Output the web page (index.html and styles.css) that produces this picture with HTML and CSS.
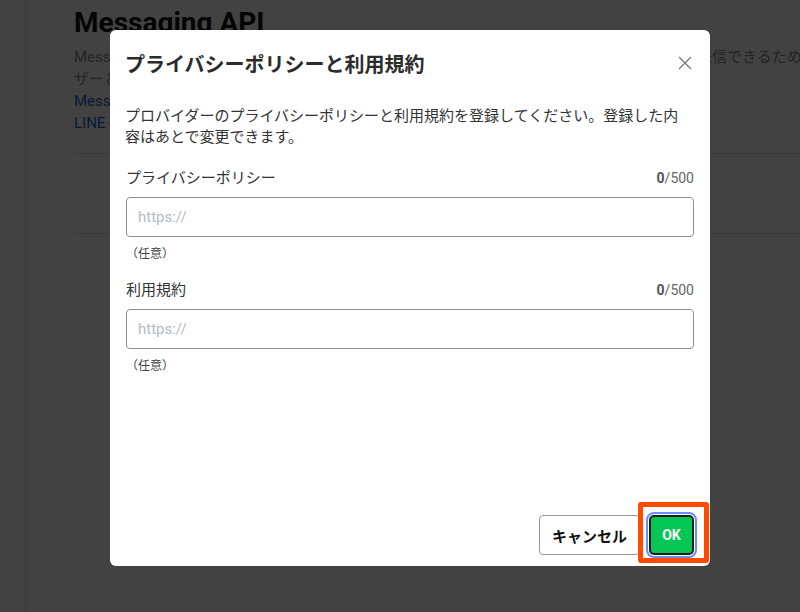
FILE: index.html
```html
<!DOCTYPE html>
<html lang="ja">
<head>
<meta charset="utf-8">
<title>プライバシーポリシーと利用規約</title>
<link rel="stylesheet" href="styles.css">
</head>
<body>
<div class="app">
  <aside class="sidebar"></aside>
  <main class="main">
    <h1 class="page-title">Messaging API</h1>
    <p class="line">Messaging APIを利用すると、ボットサーバーからユーザーに対して、それぞれメッセージを送信できるため、ユー</p>
    <p class="line">ザーとのコミュニケーションをより豊かにできます。</p>
    <p class="line link">Messaging APIドキュメント</p>
    <p class="line link">LINE Developersコンソールのドキュメント</p>
    <div class="rule first"></div>
    <div class="section"></div>
    <div class="rule"></div>
  </main>
</div>

<div class="overlay"></div>

<div class="modal" role="dialog">
  <div class="modal-header">
    <h2 class="modal-title">プライバシーポリシーと利用規約</h2>
    <button class="close" aria-label="閉じる">
      <svg width="14" height="14" viewBox="0 0 14 14"><path d="M1 1 L13 13 M13 1 L1 13" stroke="#7a7a7a" stroke-width="1.4" fill="none"/></svg>
    </button>
  </div>
  <p class="desc">プロバイダーのプライバシーポリシーと利用規約を登録してください。登録した内容はあとで変更できます。</p>

  <div class="field">
    <div class="label-row"><span class="label">プライバシーポリシー</span><span class="count"><b>0</b>/500</span></div>
    <input class="input" type="text" placeholder="https://">
    <div class="note">（任意）</div>
  </div>

  <div class="field second">
    <div class="label-row"><span class="label">利用規約</span><span class="count"><b>0</b>/500</span></div>
    <input class="input" type="text" placeholder="https://">
    <div class="note">（任意）</div>
  </div>

  <div class="modal-footer">
    <button class="btn cancel">キャンセル</button>
    <div class="ok-wrap">
      <button class="btn ok">OK</button>
      <span class="highlight"></span>
    </div>
  </div>
</div>
</body>
</html>
```

FILE: styles.css
```css
* { box-sizing: border-box; }
html, body { margin: 0; padding: 0; }
body {
  width: 800px;
  height: 612px;
  overflow: hidden;
  background: #fff;
  font-family: Roboto, "Noto Sans CJK JP", sans-serif;
  color: #333;
  position: relative;
}
.app {
  display: flex;
  height: 612px;
}
.sidebar {
  width: 26px;
  flex: none;
  border-right: 1px solid #e4e4e4;
}
.main {
  flex: 1;
  padding-left: 48px;
  padding-top: 6px;
  min-width: 0;
  overflow: hidden;
}
.page-title {
  margin: 0;
  font-size: 28px;
  line-height: 34px;
  font-weight: 700;
  color: #111;
  white-space: nowrap;
}
.line {
  margin: 0;
  font-size: 15px;
  line-height: 22px;
  color: #8a8a8a;
  white-space: nowrap;
}
.page-title + .line { margin-top: 6px; }
.line.link { color: #1f62d6; }
.rule { height: 1px; background: #dcdcdc; }
.rule.first { margin-top: 19px; }
.section { height: 79px; }

.overlay {
  position: absolute;
  inset: 0;
  background: rgba(0, 0, 0, 0.74);
}

.modal {
  position: absolute;
  left: 110px;
  top: 30px;
  width: 600px;
  height: 536px;
  background: #fff;
  border-radius: 6px;
  padding: 22px 16px 11px 15px;
  display: flex;
  flex-direction: column;
}
.modal-header {
  display: flex;
  align-items: center;
  justify-content: space-between;
}
.modal-title {
  margin: 0;
  font-size: 20px;
  line-height: 26px;
  font-weight: 700;
  color: #2b2b2b;
}
.close {
  width: 24px;
  height: 24px;
  margin-right: -3px;
  margin-top: -4px;
  border: 0;
  background: none;
  padding: 0;
  display: flex;
  align-items: center;
  justify-content: center;
}
.desc {
  margin: 28px 10px 0 0;
  font-size: 15px;
  line-height: 21px;
  color: #333;
}
.field { margin-top: 18px; padding-left: 1px; }
.field.second { margin-top: 15px; }
.label-row {
  display: flex;
  justify-content: space-between;
  align-items: center;
  line-height: 21px;
}
.label { font-size: 15px; color: #333; padding-top: 1px; }
.count { font-size: 14px; color: #666; padding-top: 2px; }
.count b { color: #555; }
.input {
  display: block;
  width: 100%;
  height: 40px;
  margin-top: 8px;
  border: 1px solid #8f8f8f;
  border-radius: 4px;
  padding: 0 11px;
  font-family: Roboto, "Noto Sans CJK JP", sans-serif;
  font-size: 15px;
  color: #333;
  background: #fff;
}
.input::placeholder { color: #b3bac4; }
.note {
  margin-top: 8px;
  font-size: 12px;
  line-height: 18px;
  color: #444;
}

.modal-footer {
  margin-top: auto;
  display: flex;
  justify-content: flex-end;
  align-items: center;
  gap: 9px;
}
.btn {
  height: 40px;
  font-family: Roboto, "Noto Sans CJK JP", sans-serif;
  font-weight: 700;
  cursor: pointer;
}
.cancel {
  width: 101px;
  background: #fff;
  border: 1px solid #979797;
  border-radius: 4px;
  font-size: 15px;
  color: #111;
  padding: 0;
}
.ok-wrap { position: relative; display: flex; }
.ok {
  width: 45px;
  background: #06c755;
  color: #fff;
  font-size: 14px;
  border: 2px solid #1e1e1e;
  border-radius: 5px;
  outline: 2px solid #6e8cff;
  outline-offset: 1px;
  padding: 0;
}
.highlight {
  position: absolute;
  left: -11px;
  top: -13px;
  right: -15px;
  bottom: -8px;
  border: 5px solid #ff4a00;
  border-radius: 3px;
  pointer-events: none;
}
```
